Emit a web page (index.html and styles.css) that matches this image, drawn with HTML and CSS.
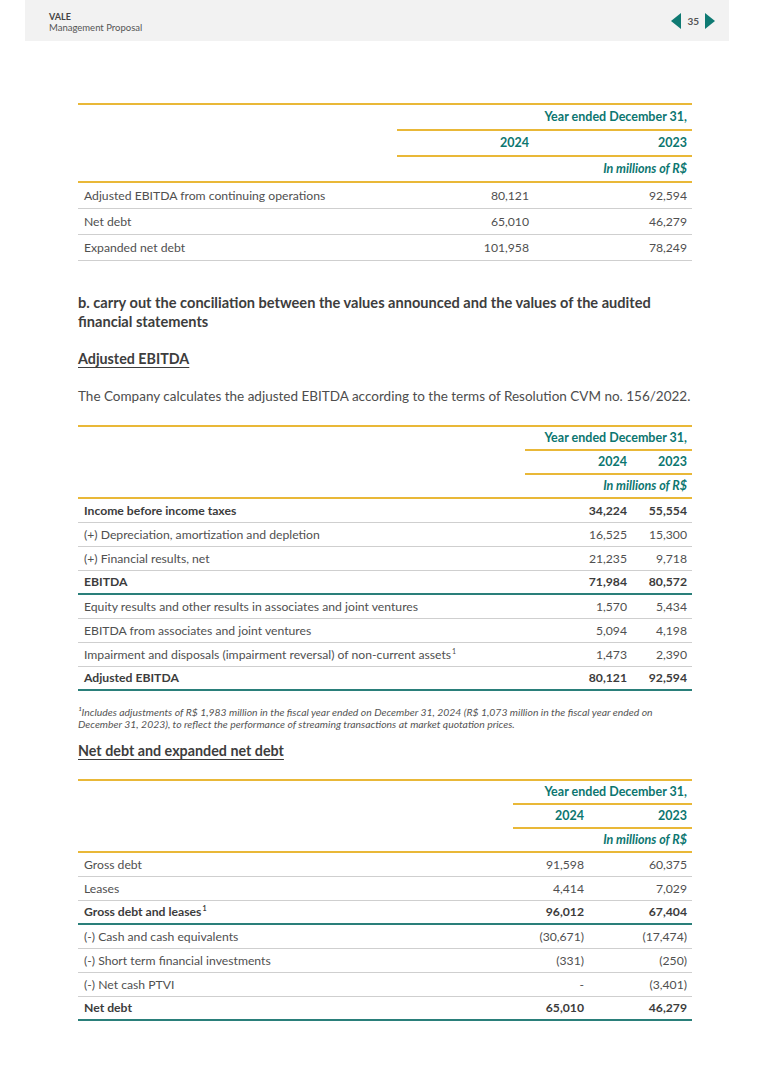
FILE: index.html
```html
<!DOCTYPE html>
<html lang="en">
<head>
<meta charset="utf-8">
<title>VALE Management Proposal</title>
<link rel="stylesheet" href="styles.css">
</head>
<body>
<header class="topbar">
  <div class="brand">
    <div class="brand-name">VALE</div>
    <div class="brand-sub">Management Proposal</div>
  </div>
  <div class="pager">
    <svg class="arrow" width="10" height="16" viewBox="0 0 10 16"><polygon points="10,0 10,16 0,8" fill="#0f7a73"/></svg>
    <span class="page-num">35</span>
    <svg class="arrow" width="10" height="16" viewBox="0 0 10 16"><polygon points="0,0 0,16 10,8" fill="#0f7a73"/></svg>
  </div>
</header>

<main class="content">
  <table class="fin t1">
    <colgroup><col class="c-label"><col class="c-a"><col class="c-b"></colgroup>
    <thead>
      <tr><th class="blank"></th><th colspan="2" class="hdr gold-b">Year ended December 31,</th></tr>
      <tr><th class="blank"></th><th class="hdr gold-b">2024</th><th class="hdr gold-b">2023</th></tr>
      <tr><th class="gold-b"></th><th colspan="2" class="hdr unit gold-b">In millions of R$</th></tr>
    </thead>
    <tbody>
      <tr><td>Adjusted EBITDA from continuing operations</td><td class="num">80,121</td><td class="num">92,594</td></tr>
      <tr><td>Net debt</td><td class="num">65,010</td><td class="num">46,279</td></tr>
      <tr><td>Expanded net debt</td><td class="num">101,958</td><td class="num">78,249</td></tr>
    </tbody>
  </table>

  <h2 class="section-title">b. carry out the conciliation between the values announced and the values of the audited financial statements</h2>

  <h3 class="sub-title">Adjusted EBITDA</h3>

  <p class="para">The Company calculates the adjusted EBITDA according to the terms of Resolution CVM no. 156/2022.</p>

  <table class="fin t2 compact">
    <colgroup><col class="c-label"><col class="c-a"><col class="c-b"></colgroup>
    <thead>
      <tr><th class="blank"></th><th colspan="2" class="hdr gold-b">Year ended December 31,</th></tr>
      <tr><th class="blank"></th><th class="hdr gold-b">2024</th><th class="hdr gold-b">2023</th></tr>
      <tr><th class="gold-b"></th><th colspan="2" class="hdr unit gold-b">In millions of R$</th></tr>
    </thead>
    <tbody>
      <tr class="bold"><td>Income before income taxes</td><td class="num">34,224</td><td class="num">55,554</td></tr>
      <tr><td>(+) Depreciation, amortization and depletion</td><td class="num">16,525</td><td class="num">15,300</td></tr>
      <tr><td>(+) Financial results, net</td><td class="num">21,235</td><td class="num">9,718</td></tr>
      <tr class="bold total"><td>EBITDA</td><td class="num">71,984</td><td class="num">80,572</td></tr>
      <tr><td>Equity results and other results in associates and joint ventures</td><td class="num">1,570</td><td class="num">5,434</td></tr>
      <tr><td>EBITDA from associates and joint ventures</td><td class="num">5,094</td><td class="num">4,198</td></tr>
      <tr><td>Impairment and disposals (impairment reversal) of non-current assets<sup>1</sup></td><td class="num">1,473</td><td class="num">2,390</td></tr>
      <tr class="bold total"><td>Adjusted EBITDA</td><td class="num">80,121</td><td class="num">92,594</td></tr>
    </tbody>
  </table>

  <p class="footnote">¹Includes adjustments of R$ 1,983 million in the fiscal year ended on December 31, 2024 (R$ 1,073 million in the fiscal year ended on December 31, 2023), to reflect the performance of streaming transactions at market quotation prices.</p>

  <h3 class="sub-title sub-2">Net debt and expanded net debt</h3>

  <table class="fin t3 compact">
    <colgroup><col class="c-label"><col class="c-a"><col class="c-b"></colgroup>
    <thead>
      <tr><th class="blank"></th><th colspan="2" class="hdr gold-b">Year ended December 31,</th></tr>
      <tr><th class="blank"></th><th class="hdr gold-b">2024</th><th class="hdr gold-b">2023</th></tr>
      <tr><th class="gold-b"></th><th colspan="2" class="hdr unit gold-b">In millions of R$</th></tr>
    </thead>
    <tbody>
      <tr><td>Gross debt</td><td class="num">91,598</td><td class="num">60,375</td></tr>
      <tr><td>Leases</td><td class="num">4,414</td><td class="num">7,029</td></tr>
      <tr class="bold total"><td>Gross debt and leases<sup>1</sup></td><td class="num">96,012</td><td class="num">67,404</td></tr>
      <tr><td>(-) Cash and cash equivalents</td><td class="num">(30,671)</td><td class="num">(17,474)</td></tr>
      <tr><td>(-) Short term financial investments</td><td class="num">(331)</td><td class="num">(250)</td></tr>
      <tr><td>(-) Net cash PTVI</td><td class="num">-</td><td class="num">(3,401)</td></tr>
      <tr class="bold total"><td>Net debt</td><td class="num">65,010</td><td class="num">46,279</td></tr>
    </tbody>
  </table>
</main>
</body>
</html>
```

FILE: styles.css
```css
html, body {
  margin: 0;
  padding: 0;
  background: #ffffff;
}

body {
  font-family: Lato, "Open Sans", Arial, sans-serif;
  color: #4d4d4d;
  width: 766px;
}

.topbar {
  margin: 0 37px 0 25px;
  height: 41px;
  background: #f2f2f2;
  display: flex;
  align-items: center;
  justify-content: space-between;
  padding: 0 14px 0 24px;
  box-sizing: border-box;
}

.brand {
  line-height: 11px;
  margin-top: 2px;
}

.brand-name {
  font-size: 9px;
  font-weight: 700;
  color: #444;
}

.brand-sub {
  font-size: 9.5px;
  color: #555;
}

.pager {
  display: flex;
  align-items: center;
  gap: 6px;
  margin-top: 1px;
}

.arrow {
  display: block;
}

.page-num {
  font-size: 10px;
  font-weight: 700;
  color: #555;
}

.content {
  margin: 0 74px 0 78px;
  padding-top: 62px;
}

/* tables */
.fin {
  width: 614px;
  border-collapse: collapse;
  table-layout: fixed;
  border-top: 2px solid #e9b838;
  font-size: 12.2px;
}

.fin th,
.fin td {
  padding: 0 5px 0 6px;
  height: 25px;
  line-height: 14px;
  vertical-align: middle;
}

.fin th {
  height: 24px;
}

.fin.compact td {
  height: 23px;
}

.fin.compact tr.total td {
  height: 22px;
}

.fin.compact th {
  height: 22px;
}

.fin th.blank {
  border: none;
}

.fin .hdr {
  color: #0c7670;
  font-weight: 700;
  font-size: 12.5px;
  text-align: right;
}

.fin .unit {
  font-style: italic;
}

.fin .gold-b {
  border-bottom: 2px solid #e9b838;
}

.fin td {
  border-bottom: 1px solid #cfcfcf;
  font-weight: 400;
  color: #505050;
}

.fin td.num {
  text-align: right;
}

.fin tr.bold td {
  font-weight: 700;
  color: #3c3c3c;
}

.fin tr.total td {
  border-bottom: 2px solid #2a7f7a;
}

.fin sup {
  font-size: 7px;
  line-height: 0;
  vertical-align: 5px;
  margin-left: 1px;
}

.t1 .c-label { width: 319px; }
.t1 .c-a { width: 137px; }
.t1 .c-b { width: 158px; }

.t2 .c-label { width: 447px; }
.t2 .c-a { width: 107px; }
.t2 .c-b { width: 60px; }

.t3 .c-label { width: 435px; }
.t3 .c-a { width: 76px; }
.t3 .c-b { width: 103px; }

.section-title {
  margin: 32px 0 0 0;
  font-size: 14.6px;
  line-height: 19px;
  font-weight: 700;
  color: #3d3d3d;
  width: 614px;
}

.sub-title {
  margin: 19px 0 0 0;
  font-size: 14.3px;
  line-height: 18px;
  font-weight: 700;
  color: #3d3d3d;
  text-decoration: underline;
  text-underline-offset: 3px;
}

.para {
  margin: 19px 0 0 0;
  font-size: 13.5px;
  line-height: 18px;
  color: #4d4d4d;
  white-space: nowrap;
}

.t2 {
  margin-top: 20px;
}

.footnote {
  margin: 15px 0 0 0;
  font-size: 10.4px;
  line-height: 12px;
  font-style: italic;
  color: #555;
}

.sub-2 {
  margin-top: 12px;
}

.t3 {
  margin-top: 19px;
}
```
